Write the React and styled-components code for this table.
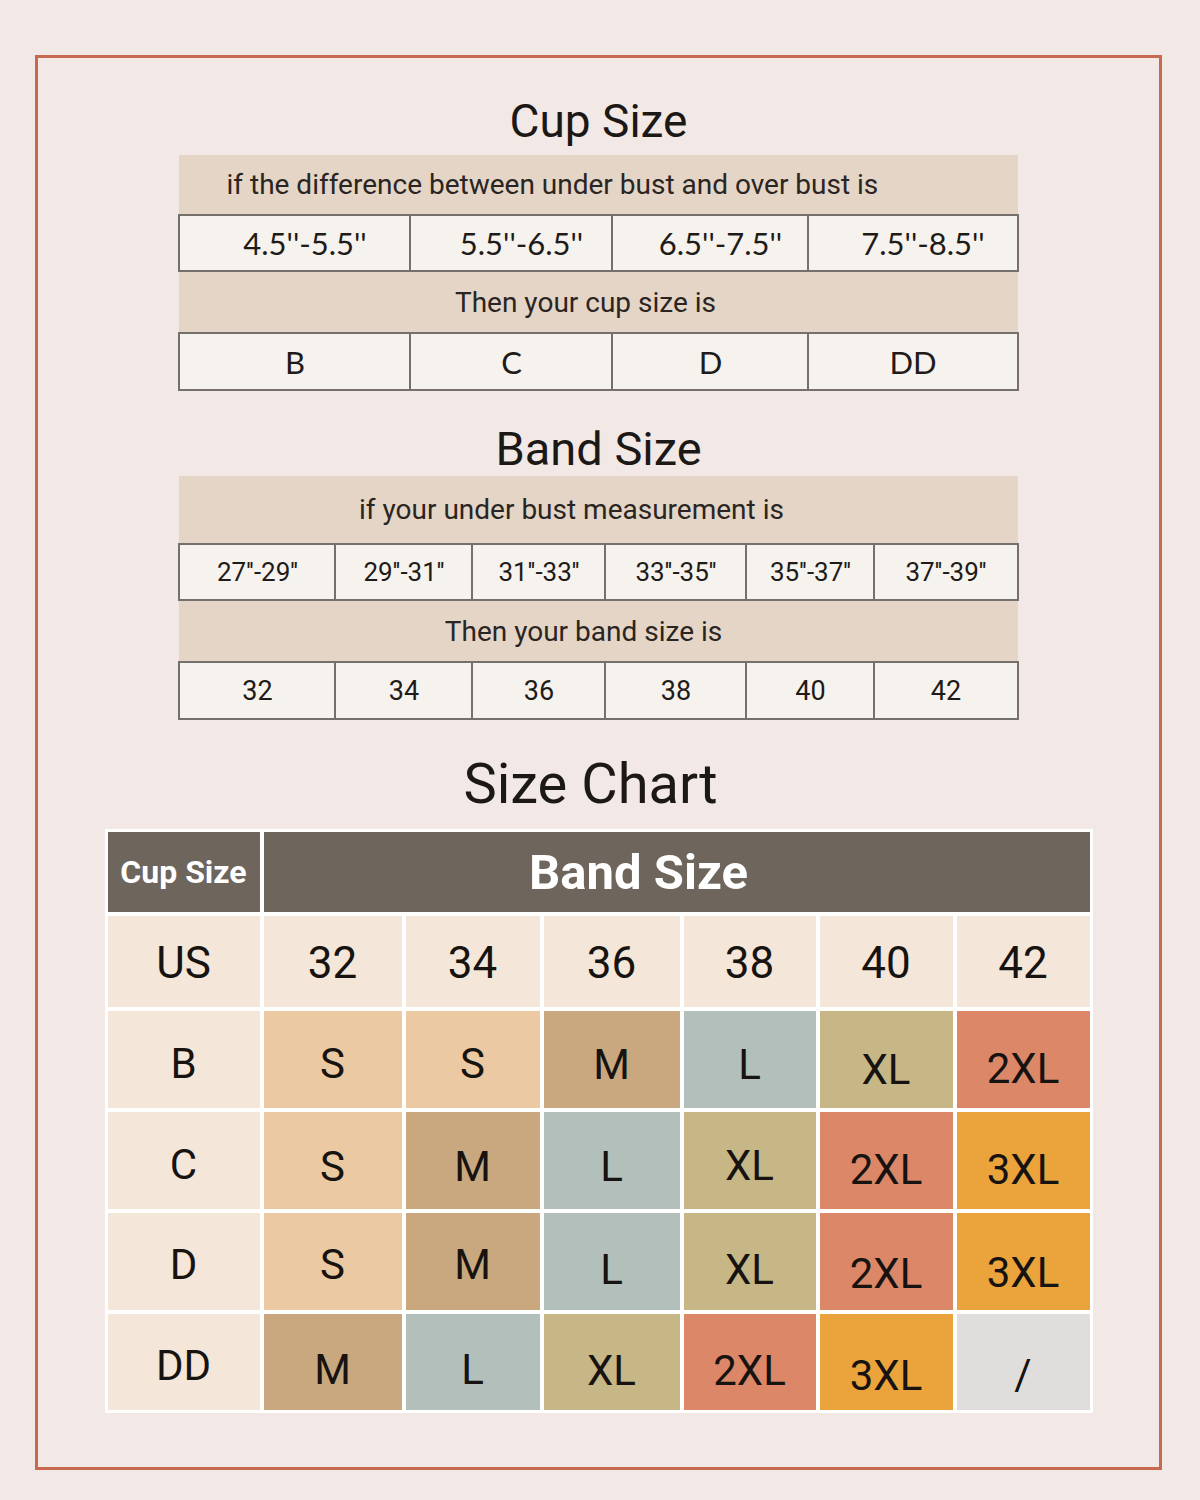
import React from 'react';
import styled, { createGlobalStyle } from 'styled-components';

const GlobalStyle = createGlobalStyle`
  body {
    margin: 0;
    background: #f2e9e6;
    font-family: Roboto, "Liberation Sans", sans-serif;
    color: #221e1b;
  }
  #root {
    min-height: 1500px;
  }
`;

const cupRanges = [`4.5''-5.5''`, `5.5''-6.5''`, `6.5''-7.5''`, `7.5''-8.5''`];
const cupSizes = ['B', 'C', 'D', 'DD'];
const cupCols = [231, 202, 196, 209];

const bandRanges = [`27''-29''`, `29''-31''`, `31''-33''`, `33''-35''`, `35''-37''`, `37''-39''`];
const bandSizes = ['32', '34', '36', '38', '40', '42'];
const bandCols = [156, 137, 133, 141, 128, 143];

const sizeColors = {
  S: '#ebc9a2',
  M: '#c9a77f',
  L: '#b2bfbb',
  XL: '#c7b786',
  '2XL': '#db8768',
  '3XL': '#eba43c',
  '/': '#dfdedc',
};

// dy = how far the label sits below the middle of its cell
const chartRows = [
  { cup: 'B', dy: 4, cells: [['S', 4], ['S', 4], ['M', 5], ['L', 5], ['XL', 10], ['2XL', 9]] },
  { cup: 'C', dy: 4, cells: [['S', 6], ['M', 6], ['L', 6], ['XL', 5], ['2XL', 9], ['3XL', 9]] },
  { cup: 'D', dy: 3, cells: [['S', 3], ['M', 3], ['L', 8], ['XL', 8], ['2XL', 12], ['3XL', 11]] },
  { cup: 'DD', dy: 3, cells: [['M', 7], ['L', 7], ['XL', 8], ['2XL', 8], ['3XL', 13], ['/', 12]] },
];

const Frame = styled.div`
  box-sizing: border-box;
  width: 1127px;
  height: 1415px;
  margin: 55px 0 0 35px;
  border: 3px solid #c6694f;
  padding-top: 35px;
  display: flex;
  flex-direction: column;
  align-items: center;
`;

const Title = styled.h2`
  margin: ${p => p.$mt}px 0 0;
  font-family: Roboto, sans-serif;
  font-weight: 400;
  font-size: ${p => p.$size}px;
  line-height: ${p => p.$lh}px;
  color: #1c1816;
  text-align: center;
  transform: translateX(${p => p.$dx || 0}px);
`;

const Table = styled.table`
  width: 838px;
  border-collapse: collapse;
  table-layout: fixed;
  margin-top: ${p => p.$mt}px;
`;

const LabelCell = styled.td`
  height: ${p => p.$h}px;
  padding: 0 ${p => p.$pr || 0}px 0 ${p => p.$pl || 0}px;
  background: #e4d5c7;
  font-family: Roboto, sans-serif;
  font-size: 28px;
  color: #2a2522;
  text-align: ${p => p.$align || 'center'};
  white-space: nowrap;
`;

const ValueCell = styled.td`
  height: ${p => p.$h}px;
  padding: 0 0 0 ${p => p.$pl || 0}px;
  background: #f6f2ee;
  border: 2px solid #75706c;
  font-family: ${p => p.$font};
  font-size: ${p => p.$size}px;
  color: #1f1b18;
  text-align: center;
  white-space: nowrap;
`;

const Chart = styled.div`
  margin-top: 13px;
  padding: 3px;
  background: #ffffff;
  display: grid;
  grid-template-columns: 152px 138px 134px 136px 132px 133px 133px;
  grid-template-rows: 80px 91px 97px 97px 97px 96px;
  gap: 4px;
`;

const HeadCell = styled.div`
  grid-column: ${p => p.$span ? `span ${p.$span}` : 'auto'};
  background: #6e655c;
  color: #ffffff;
  font-family: Roboto, sans-serif;
  font-weight: 700;
  font-size: ${p => p.$size}px;
  display: flex;
  align-items: center;
  justify-content: center;
  padding-right: ${p => p.$pr || 0}px;
`;

const Cell = styled.div`
  background: ${p => p.$bg};
  font-family: Roboto, sans-serif;
  font-size: ${p => p.$size}px;
  color: #161310;
  display: flex;
  align-items: center;
  justify-content: center;
  padding-top: ${p => (p.$dy || 0) * 2}px;
`;

const App = () => (
  <>
    <GlobalStyle />
    <Frame>
      <Title $size={46} $lh={56} $mt={0}>Cup Size</Title>
      <Table $mt={6}>
        <colgroup>
          {cupCols.map((w, i) => <col key={i} style={{ width: w }} />)}
        </colgroup>
        <tbody>
          <tr>
            <LabelCell colSpan={4} $h={59} $align="left" $pl={47}>
              if the difference between under bust and over bust is
            </LabelCell>
          </tr>
          <tr>
            {cupRanges.map(r => (
              <ValueCell key={r} $h={54} $size={31} $pl={20} $font="Lato, sans-serif">{r}</ValueCell>
            ))}
          </tr>
          <tr>
            <LabelCell colSpan={4} $h={60} $pr={26}>Then your cup size is</LabelCell>
          </tr>
          <tr>
            {cupSizes.map(c => (
              <ValueCell key={c} $h={55} $size={31} $font="Lato, sans-serif">{c}</ValueCell>
            ))}
          </tr>
        </tbody>
      </Table>

      <Title $size={47} $lh={54} $mt={31}>Band Size</Title>
      <Table $mt={0}>
        <colgroup>
          {bandCols.map((w, i) => <col key={i} style={{ width: w }} />)}
        </colgroup>
        <tbody>
          <tr>
            <LabelCell colSpan={6} $h={67} $pr={54}>if your under bust measurement is</LabelCell>
          </tr>
          <tr>
            {bandRanges.map(r => (
              <ValueCell key={r} $h={54} $size={26} $font="Roboto, sans-serif">{r}</ValueCell>
            ))}
          </tr>
          <tr>
            <LabelCell colSpan={6} $h={60} $pr={30}>Then your band size is</LabelCell>
          </tr>
          <tr>
            {bandSizes.map(b => (
              <ValueCell key={b} $h={55} $size={27} $font="Roboto, sans-serif">{b}</ValueCell>
            ))}
          </tr>
        </tbody>
      </Table>

      <Title $size={56} $lh={64} $mt={32} $dx={-8}>Size Chart</Title>
      <Chart>
        <HeadCell $size={32}>Cup Size</HeadCell>
        <HeadCell $span={6} $size={49} $pr={76}>Band Size</HeadCell>

        <Cell $bg="#f4e6d8" $size={44} $dy={1}>US</Cell>
        {bandSizes.map(b => (
          <Cell key={b} $bg="#f4e6d8" $size={44} $dy={1}>{b}</Cell>
        ))}

        {chartRows.map(row => (
          <React.Fragment key={row.cup}>
            <Cell $bg="#f4e6d8" $size={42} $dy={row.dy}>{row.cup}</Cell>
            {row.cells.map(([size, dy], i) => (
              <Cell key={i} $bg={sizeColors[size]} $size={42} $dy={dy}>{size}</Cell>
            ))}
          </React.Fragment>
        ))}
      </Chart>
    </Frame>
  </>
);

export default App;
